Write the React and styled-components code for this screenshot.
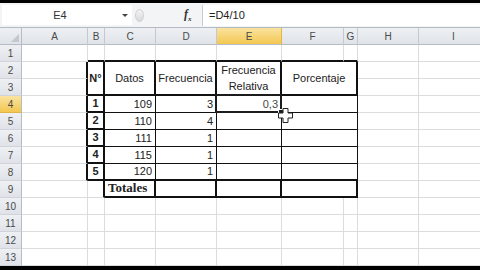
import React from "react";
import styled, { createGlobalStyle, css } from "styled-components";

const GlobalStyle = createGlobalStyle`
  html, body {
    margin: 0;
    padding: 0;
    background: #000;
    overflow: hidden;
  }
  body {
    font-family: "Liberation Sans", Arial, sans-serif;
  }
`;

const Screen = styled.div`
  width: 480px;
  height: 270px;
  padding-top: 3px;
  box-sizing: border-box;
  display: flex;
  flex-direction: column;
  background: #000;
  overflow: hidden;
`;

const FormulaBar = styled.div`
  height: 25px;
  flex: none;
  display: flex;
  align-items: center;
  padding-left: 2px;
  background: #f3f4f6;
  border-bottom: 1px solid #b4bac2;
  box-sizing: border-box;
`;

const NameBox = styled.div`
  width: 116px;
  height: 20px;
  display: flex;
  align-items: center;
  justify-content: center;
  background: #fff;
  font-size: 11px;
  color: #333;
`;

const DropArrow = styled.div`
  width: 14px;
  height: 20px;
  display: flex;
  align-items: center;
  justify-content: center;
  background: #fff;
  &::after {
    content: "";
    border-left: 3px solid transparent;
    border-right: 3px solid transparent;
    border-top: 3px solid #444;
  }
`;

const Knob = styled.div`
  width: 9px;
  height: 13px;
  margin-left: 3px;
  border-radius: 50%;
  background: linear-gradient(#f4f4f4, #d8d8d8);
  border: 1px solid #d0d0d0;
  box-sizing: border-box;
`;

const Fx = styled.div`
  margin-left: 40px;
  width: 14px;
  margin-right: 4px;
  font-family: "Liberation Serif", serif;
  font-style: italic;
  font-weight: bold;
  font-size: 12px;
  color: #333;
  sub {
    font-size: 7px;
  }
`;

const FormulaInput = styled.div`
  flex: 1;
  height: 21px;
  display: flex;
  align-items: center;
  padding-left: 6px;
  background: #fff;
  border-left: 1px solid #c8ccd2;
  font-size: 11px;
  color: #222;
`;

const Sheet = styled.div`
  position: relative;
  flex: none;
  display: grid;
  grid-template-columns: 22px 66px 17px 51px 61px 65px 62px 14px 61px 70px;
  grid-auto-rows: 17px;
  background: #fff;
`;

const headerSkin = css`
  display: flex;
  align-items: center;
  justify-content: center;
  font-size: 10px;
  color: #4a4a4a;
  box-sizing: border-box;
  background: ${(p) =>
    p.$active
      ? "linear-gradient(#fbe3a0, #f3c751)"
      : "linear-gradient(#eef0f3, #dfe3e9)"};
`;

const Corner = styled.div`
  ${headerSkin};
  position: relative;
  border-right: 1px solid #b6bcc5;
  border-bottom: 1px solid #b6bcc5;
  &::after {
    content: "";
    position: absolute;
    right: 2px;
    bottom: 2px;
    border-left: 8px solid transparent;
    border-bottom: 8px solid #c3c8cf;
  }
`;

const ColHead = styled.div`
  ${headerSkin};
  border-right: 1px solid ${(p) => (p.$active ? "#e2b546" : "#c4c9d0")};
  border-bottom: 1px solid #b6bcc5;
`;

const RowHead = styled.div`
  ${headerSkin};
  border-right: 1px solid #b6bcc5;
  border-bottom: 1px solid ${(p) => (p.$active ? "#e2b546" : "#d0d4da")};
`;

const Cell = styled.div`
  position: relative;
  grid-row: ${(p) => p.$r} / span ${(p) => p.$rs};
  grid-column: ${(p) => p.$c} / span ${(p) => p.$cs};
  display: flex;
  flex-direction: column;
  align-items: ${(p) =>
    p.$align === "right" ? "flex-end" : p.$align === "center" ? "center" : "flex-start"};
  justify-content: ${(p) => (p.$rs > 1 ? "center" : "flex-end")};
  padding: 0 3px 1px;
  box-sizing: border-box;
  border-right: ${(p) => (p.$rw ? `${p.$rw}px solid #111` : "1px solid #dadde0")};
  border-bottom: ${(p) => (p.$bw ? `${p.$bw}px solid #111` : "1px solid #dadde0")};
  font-size: 11px;
  line-height: ${(p) => (p.$rs > 1 ? "16px" : "14px")};
  font-weight: ${(p) => (p.$bold ? "bold" : "normal")};
  color: ${(p) => p.$color || "#222"};
  white-space: nowrap;
  ${(p) =>
    p.$serif &&
    css`
      font-family: "Liberation Serif", serif;
      font-size: 13px;
    `}
  ${(p) =>
    p.$selected &&
    css`
      z-index: 2;
      &::after {
        content: "";
        position: absolute;
        left: -2px;
        top: -2px;
        right: -1px;
        bottom: -1px;
        border: 2px solid #1c1c1c;
      }
      &::before {
        content: "";
        position: absolute;
        right: -4px;
        bottom: -4px;
        width: 5px;
        height: 5px;
        background: #1c1c1c;
        border: 1px solid #fff;
        z-index: 3;
      }
    `}
`;

const Cursor = styled.svg`
  position: absolute;
  left: 278px;
  top: 80px;
  z-index: 5;
`;

const COLS = ["A", "B", "C", "D", "E", "F", "G", "H", "I"];
const ROWS = 13;

const DATA = {
  B2: { text: "N°", rs: 2, bold: true, align: "center" },
  C2: { text: "Datos", rs: 2, align: "center" },
  D2: { text: "Frecuencia", rs: 2, align: "center" },
  E2: { text: ["Frecuencia", "Relativa"], rs: 2, align: "center" },
  F2: { text: "Porcentaje", rs: 2, cs: 2, align: "center" },
  C9: { text: "Totales", bold: true, serif: true },
  D9: {},
  E9: {},
  F9: { cs: 2 },
};

const values = [
  [109, 3],
  [110, 4],
  [111, 1],
  [115, 1],
  [120, 1],
];
values.forEach(([dato, freq], i) => {
  const r = 4 + i;
  DATA["B" + r] = { text: String(i + 1), bold: true, align: "center" };
  DATA["C" + r] = { text: String(dato), align: "right" };
  DATA["D" + r] = { text: String(freq), align: "right" };
  DATA["F" + r] = { cs: 2 };
});
DATA.E4 = { text: "0,3", align: "right", color: "#4a4a4a", selected: true };

// cells inside the drawn table, and how heavy their lines are
const boxed = (r, c) =>
  (r >= 2 && r <= 8 && c >= 1 && c <= 6) || (r === 9 && c >= 2 && c <= 6);
const weight = (r, c) => (boxed(r, c) ? (r <= 3 || c === 1 || r === 9 ? 2 : 1) : 0);

function buildCells() {
  const covered = new Set();
  const cells = [];
  for (let r = 1; r <= ROWS; r++) {
    for (let c = 0; c < COLS.length; c++) {
      const key = COLS[c] + r;
      if (covered.has(key)) continue;
      const d = DATA[key] || {};
      const rs = d.rs || 1;
      const cs = d.cs || 1;
      for (let i = 0; i < rs; i++)
        for (let j = 0; j < cs; j++) if (i || j) covered.add(COLS[c + j] + (r + i));
      const rw = Math.max(weight(r, c), weight(r, c + cs));
      const bw = Math.max(weight(r, c), weight(r + rs, c));
      cells.push({ key, r, c, rs, cs, rw, bw, ...d });
    }
  }
  return cells;
}

const cells = buildCells();

export default function App() {
  return (
    <>
      <GlobalStyle />
      <Screen>
        <FormulaBar>
          <NameBox>E4</NameBox>
          <DropArrow />
          <Knob />
          <Fx>
            f<sub>x</sub>
          </Fx>
          <FormulaInput>=D4/10</FormulaInput>
        </FormulaBar>
        <Sheet>
          <Corner />
          {COLS.map((col) => (
            <ColHead key={col} $active={col === "E"}>
              {col}
            </ColHead>
          ))}
          {Array.from({ length: ROWS }, (_, i) => (
            <RowHead
              key={"r" + i}
              $active={i + 1 === 4}
              style={{ gridRow: i + 2, gridColumn: 1 }}
            >
              {i + 1}
            </RowHead>
          ))}
          {cells.map((cell) => (
            <Cell
              key={cell.key}
              $r={cell.r + 1}
              $c={cell.c + 2}
              $rs={cell.rs}
              $cs={cell.cs}
              $rw={cell.rw}
              $bw={cell.bw}
              $align={cell.align}
              $bold={cell.bold}
              $serif={cell.serif}
              $color={cell.color}
              $selected={cell.selected}
            >
              {Array.isArray(cell.text)
                ? cell.text.map((t) => <span key={t}>{t}</span>)
                : cell.text}
            </Cell>
          ))}
          <Cursor width="15" height="15" viewBox="0 0 15 15">
            <polygon
              points="5,0.5 10,0.5 10,5 14.5,5 14.5,10 10,10 10,14.5 5,14.5 5,10 0.5,10 0.5,5 5,5"
              fill="#fff"
              stroke="#222"
              strokeWidth="1"
            />
          </Cursor>
        </Sheet>
      </Screen>
    </>
  );
}
